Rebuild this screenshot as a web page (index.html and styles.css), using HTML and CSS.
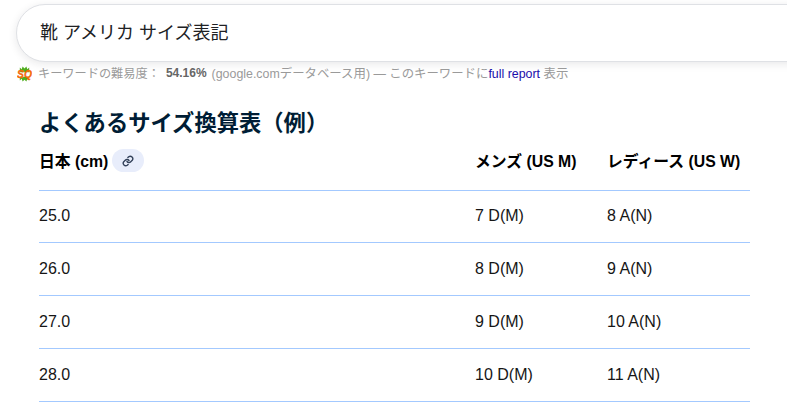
FILE: index.html
```html
<!DOCTYPE html>
<html lang="ja">
<head>
<meta charset="utf-8">
<title>靴 アメリカ サイズ表記</title>
<link rel="stylesheet" href="styles.css">
</head>
<body>
<div class="page">
  <div class="searchbox">靴 アメリカ サイズ表記</div>
  <div class="kd">
    <svg class="sq" width="15" height="18" viewBox="0 0 16 18">
      <path fill="#4fae1f" d="M3 2l2 2 1-3 2 2 2-2 1 3 2-2 0 5-10 0zM3 12l10 0 0 4-2-2-1 3-2-2-2 2-1-3-2 2z"/>
      <text x="8" y="13" text-anchor="middle" class="sq-text">SQ</text>
    </svg>
    <span class="kd-label">キーワードの難易度：</span>
    <b class="kd-value">54.16%</b>
    <span class="kd-note">(google.comデータベース用) — このキーワードに<a class="kd-link" href="#">full report</a> 表示</span>
  </div>
  <main class="content">
    <h2 class="title">よくあるサイズ換算表（例）</h2>
    <table class="sizes">
      <thead>
        <tr>
          <th class="c1"><span class="th-wrap">日本 (cm)<span class="chip"><svg width="12" height="12" viewBox="0 0 24 24" fill="none" stroke="#33415a" stroke-width="2.800" stroke-linecap="round" stroke-linejoin="round"><path d="M10 13a5 5 0 0 0 7.500.500l3-3a5 5 0 0 0-7-7l-1.700 1.700"/><path d="M14 11a5 5 0 0 0-7.500-.500l-3 3a5 5 0 0 0 7 7l1.700-1.700"/></svg></span></span></th>
          <th class="c2">メンズ (US M)</th>
          <th class="c3">レディース (US W)</th>
        </tr>
      </thead>
      <tbody>
        <tr><td>25.0</td><td>7 D(M)</td><td>8 A(N)</td></tr>
        <tr><td>26.0</td><td>8 D(M)</td><td>9 A(N)</td></tr>
        <tr><td>27.0</td><td>9 D(M)</td><td>10 A(N)</td></tr>
        <tr><td>28.0</td><td>10 D(M)</td><td>11 A(N)</td></tr>
      </tbody>
    </table>
  </main>
</div>
</body>
</html>
```

FILE: styles.css
```css
html, body {
  margin: 0;
  padding: 0;
  background: #fff;
  overflow: hidden;
}
body {
  font-family: "Liberation Sans", Arial, "Noto Sans CJK JP", sans-serif;
  color: #000;
}
.page {
  width: 787px;
  height: 412px;
  overflow: hidden;
  padding-top: 4px;
  box-sizing: border-box;
}
.searchbox {
  margin-left: 16px;
  width: 900px;
  height: 58px;
  box-sizing: border-box;
  border: 1px solid #dfe1e5;
  border-radius: 29px;
  box-shadow: 0 2px 8px rgba(32, 33, 36, 0.10);
  padding-left: 23px;
  line-height: 57px;
  font-size: 18px;
  color: #202124;
  background: #fff;
}
.kd {
  display: flex;
  align-items: center;
  height: 20px;
  margin-top: 1px;
  padding-left: 17px;
  font-size: 12px;
  color: #9a9a9a;
  white-space: pre;
}
.sq {
  flex: none;
  margin: 2px 6px 0 0;
}
.sq-text {
  font: italic bold 11px "Liberation Sans", sans-serif;
  fill: #f5690a;
  stroke: #f5690a;
  stroke-width: 0.3px;
}
.kd-label {
  margin-right: 6px;
  font-size: 12.200px;
}
.kd-value {
  color: #666;
  margin-right: 5px;
}
.kd-note {
  font-size: 12.400px;
}
.kd-link {
  color: #1a0dab;
  font-size: 12.400px;
  text-decoration: none;
}
.content {
  margin-left: 39px;
  width: 711px;
}
.title {
  margin: 0;
  padding-top: 26px;
  font-size: 22.300px;
  line-height: 30px;
  font-weight: 700;
  color: #001d35;
}
.sizes {
  width: 711px;
  border-collapse: collapse;
  table-layout: fixed;
  font-size: 16px;
}
.sizes th {
  height: 51px;
  padding: 0 0 7px;
  font-size: 15.800px;
  font-weight: 700;
  text-align: left;
  color: #000;
  box-sizing: border-box;
  vertical-align: middle;
}
.sizes th, .sizes td {
  border-bottom: 1px solid #a3c9ff;
}
.sizes td {
  height: 52.800px;
  padding: 0;
  box-sizing: border-box;
  color: #161616;
}
.c1 { width: 436px; }
.c2 { width: 132px; }
.th-wrap {
  display: flex;
  align-items: center;
}
.chip {
  display: inline-flex;
  align-items: center;
  justify-content: center;
  width: 32px;
  height: 23px;
  margin-left: 4px;
  border-radius: 12px;
  background: #e8edfb;
}
```
